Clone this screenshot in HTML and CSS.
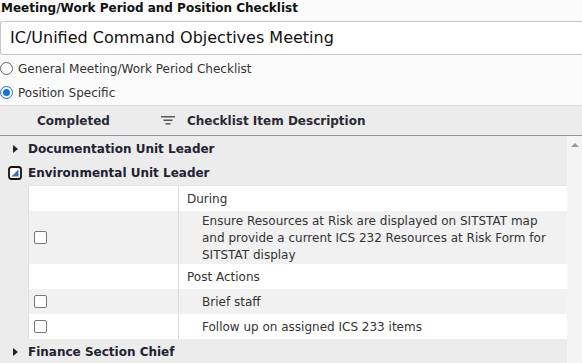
FILE: index.html
```html
<!DOCTYPE html>
<html>
<head>
<meta charset="utf-8">
<link rel="stylesheet" href="styles.css">
</head>
<body>
<div class="page">
  <div class="title">Meeting/Work Period and Position Checklist</div>
  <div class="input">IC/Unified Command Objectives Meeting</div>
  <label class="radio"><span class="dot"></span>General Meeting/Work Period Checklist</label>
  <label class="radio"><span class="dot on"></span>Position Specific</label>

  <div class="grid">
    <div class="ghead">
      <div class="hcol1">Completed</div>
      <svg class="filter" width="14" height="9" viewBox="0 0 14 9"><rect x="0" y="0" width="14" height="1.5" fill="#555"/><rect x="2.5" y="3.5" width="9" height="1.5" fill="#555"/><rect x="4.5" y="7" width="5" height="1.5" fill="#555"/></svg>
      <div class="hcol2">Checklist Item Description</div>
    </div>
    <div class="gbody">
      <div class="rows">
        <div class="group"><span class="tri"></span>Documentation Unit Leader</div>
        <div class="group"><svg class="exp" width="14" height="14" viewBox="0 0 14 14"><rect x="1" y="1" width="12" height="12" rx="2.5" fill="#fff" stroke="#111" stroke-width="1.8"/><path d="M10.5 3.5 L10.5 10.5 L3.5 10.5 Z" fill="#3b6fb6"/></svg>Environmental Unit Leader</div>
        <div class="detail">
          <div class="drow white"><div class="c1"></div><div class="c2">During</div></div>
          <div class="drow gray tall"><div class="c1"><span class="cb"></span></div><div class="c2 ind">Ensure Resources at Risk are displayed on SITSTAT map and provide a current ICS 232 Resources at Risk Form for SITSTAT display</div></div>
          <div class="drow white"><div class="c1"></div><div class="c2">Post Actions</div></div>
          <div class="drow gray"><div class="c1"><span class="cb"></span></div><div class="c2 ind">Brief staff</div></div>
          <div class="drow white"><div class="c1"><span class="cb"></span></div><div class="c2 ind">Follow up on assigned ICS 233 items</div></div>
        </div>
        <div class="group"><span class="tri"></span>Finance Section Chief</div>
      </div>
      <div class="scroll"><span class="up"></span></div>
    </div>
  </div>
</div>
</body>
</html>
```
FILE: styles.css
```css
html, body {
  margin: 0;
  padding: 0;
  background: #fbfbfb;
}
.page {
  font-family: "DejaVu Sans", Verdana, sans-serif;
  font-size: 12px;
  color: #222;
  width: 582px;
  height: 363px;
  overflow: hidden;
}
.title {
  font-weight: bold;
  height: 21px;
  line-height: 16px;
  padding-left: 1px;
  color: #111;
}
.input {
  height: 34px;
  box-sizing: border-box;
  border-top: 1px solid #c6c6c6;
  border-bottom: 1px solid #c6c6c6;
  border-left: 1px solid #c6c6c6;
  border-radius: 3px 0 0 3px;
  background: #fff;
  font-size: 16px;
  line-height: 32px;
  padding-left: 9px;
  color: #111;
}
.radio {
  display: flex;
  align-items: center;
  height: 24px;
  gap: 5px;
  color: #333;
  box-sizing: border-box;
  padding-top: 1px;
}
.radio:first-of-type { margin-top: 1px; }
.dot {
  width: 11px;
  height: 11px;
  border: 1px solid #666;
  border-radius: 50%;
  background: #fff;
  box-sizing: content-box;
  position: relative;
}
.dot.on {
  border-color: #1a6fd8;
}
.dot.on::after {
  content: "";
  position: absolute;
  left: 2px; top: 2px;
  width: 7px; height: 7px;
  border-radius: 50%;
  background: #1a6fd8;
}
.grid {
  margin-top: 1px;
  background: #ececec;
  border-top: 1px solid #d8d8d8;
}
.ghead {
  height: 29px;
  display: flex;
  align-items: center;
  border-bottom: 1px solid #8c96a0;
  font-weight: bold;
  color: #2a2a33;
}
.hcol1 {
  padding-left: 37px;
  width: 124px;
}
.filter {
  margin-right: 12px;
}
.gbody {
  display: flex;
}
.rows {
  flex: 1;
}
.scroll {
  width: 15px;
  background: #f4f4f4;
  position: relative;
}
.up {
  position: absolute;
  left: 4px;
  top: 7px;
  width: 0; height: 0;
  border-left: 4px solid transparent;
  border-right: 4px solid transparent;
  border-bottom: 4px solid #999;
}
.group {
  height: 24px;
  box-sizing: border-box;
  padding-top: 2px;
  display: flex;
  align-items: center;
  font-weight: bold;
  color: #222233;
  padding-left: 28px;
  position: relative;
}
.tri {
  position: absolute;
  left: 13px;
  top: 9px;
  width: 0; height: 0;
  border-top: 4px solid transparent;
  border-bottom: 4px solid transparent;
  border-left: 5px solid #222;
}
.exp {
  position: absolute;
  left: 8px;
  top: 6px;
}
.detail {
  margin-left: 28px;
  border-top: 1px solid #e4e4e4;
  border-left: 1px solid #e0e0e0;
  margin-top: 1px;
}
.drow {
  display: flex;
  min-height: 25px;
}
.drow.tall { height: 53px; }
.drow.white { background: #fff; }
.drow.gray { background: #f1f1f1; }
.c1 {
  box-sizing: border-box;
  width: 150px;
  border-right: 1px solid #dcdcdc;
  display: flex;
  align-items: center;
  padding-left: 5px;
}
.c2 {
  flex: 1;
  padding-left: 8px;
  padding-top: 2px;
  display: flex;
  align-items: center;
  line-height: 17px;
  color: #333;
}
.c2.ind { padding-left: 23px; padding-right: 10px; }
.cb {
  width: 11px;
  height: 11px;
  border: 1px solid #777;
  border-radius: 2px;
  background: #fff;
}
```
